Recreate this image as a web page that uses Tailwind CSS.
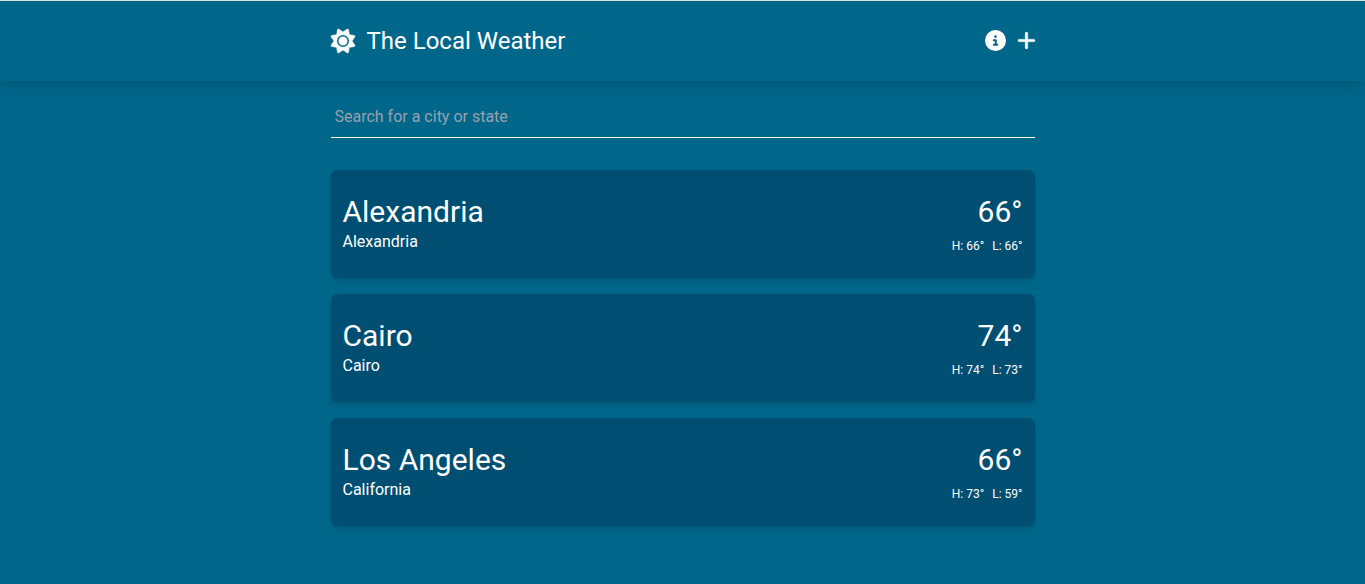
<!DOCTYPE html>
<html lang="en">
<head>
<meta charset="utf-8">
<meta name="viewport" content="width=device-width, initial-scale=1">
<title>The Local Weather</title>
<script src="https://cdn.jsdelivr.net/npm/@tailwindcss/browser@4"></script>
</head>
<body class="min-h-screen bg-[#00668a] font-['Roboto',sans-serif] text-white">
<header class="sticky top-0 border-t border-[#d9e2e2] bg-[#00668a] shadow-lg">
  <nav class="mx-auto flex max-w-3xl items-center justify-between px-8 py-6">
    <a href="#" class="flex items-center gap-3">
      <svg class="size-6 overflow-visible" viewBox="0 0 512 512" aria-hidden="true">
        <path fill="currentColor" stroke="currentColor" stroke-width="14" d="M361.5 1.2c5 2.1 8.6 6.6 9.6 11.9L391 121l107.9 19.8c5.3 1 9.8 4.6 11.9 9.6s1.5 10.7-1.6 15.2L446.9 256l62.3 90.3c3.1 4.5 3.7 10.2 1.6 15.2s-6.6 8.6-11.9 9.6L391 391 371.1 498.9c-1 5.3-4.6 9.8-9.6 11.9s-10.7 1.5-15.2-1.6L256 446.9l-90.3 62.3c-4.5 3.1-10.2 3.7-15.2 1.6s-8.6-6.6-9.6-11.9L121 391 13.1 371.1c-5.3-1-9.8-4.6-11.9-9.6s-1.5-10.7 1.6-15.2L65.1 256 2.8 165.7c-3.1-4.5-3.7-10.2-1.6-15.2s6.6-8.6 11.9-9.6L121 121 140.9 13.1c1-5.3 4.6-9.8 9.6-11.9s10.7-1.5 15.2 1.6L256 65.1 346.300 2.800c4.500-3.100 10.200-3.700 15.200-1.600z"/>
        <circle cx="256" cy="256" r="112" fill="none" stroke="#00668a" stroke-width="32"/>
      </svg>
      <span class="text-2xl">The Local Weather</span>
    </a>
    <div class="flex items-center gap-3 pb-px">
      <button type="button" aria-label="About">
        <svg class="block size-[21px]" viewBox="0 0 512 512" fill="currentColor" aria-hidden="true"><path d="M256 512A256 256 0 1 0 256 0a256 256 0 1 0 0 512zM216 336h24V272H216c-13.300 0-24-10.700-24-24s10.700-24 24-24h48c13.300 0 24 10.700 24 24v88h8c13.300 0 24 10.700 24 24s-10.700 24-24 24H216c-13.300 0-24-10.700-24-24s10.700-24 24-24zm40-208a32 32 0 1 1 0 64 32 32 0 1 1 0-64z"/></svg>
      </button>
      <button type="button" aria-label="Add city">
        <svg class="block h-[21px] w-[17px] overflow-visible" viewBox="16 0 416 512" fill="currentColor" stroke="currentColor" stroke-width="8" aria-hidden="true"><path d="M256 80c0-17.700-14.300-32-32-32s-32 14.300-32 32V224H48c-17.700 0-32 14.300-32 32s14.300 32 32 32H192V432c0 17.700 14.300 32 32 32s32-14.300 32-32V288H400c17.700 0 32-14.300 32-32s-14.300-32-32-32H256V80z"/></svg>
      </button>
    </div>
  </nav>
</header>
<main class="mx-auto max-w-3xl px-8 pt-4">
  <input type="text" aria-label="Search for a city or state" placeholder="Search for a city or state" class="mb-8 block w-full border-b border-white bg-transparent px-1 py-2 placeholder:text-gray-400 focus:outline-none">
  <ul class="flex flex-col gap-4">
    <li class="flex justify-between rounded-md bg-[#004e71] px-3 py-6 shadow-md">
      <div>
        <h2 class="text-3xl">Alexandria</h2>
        <p>Alexandria</p>
      </div>
      <div class="flex flex-col items-end gap-2">
        <p class="text-3xl">66°</p>
        <p class="flex gap-2 text-xs"><span>H: 66°</span><span>L: 66°</span></p>
      </div>
    </li>
    <li class="flex justify-between rounded-md bg-[#004e71] px-3 py-6 shadow-md">
      <div>
        <h2 class="text-3xl">Cairo</h2>
        <p>Cairo</p>
      </div>
      <div class="flex flex-col items-end gap-2">
        <p class="text-3xl">74°</p>
        <p class="flex gap-2 text-xs"><span>H: 74°</span><span>L: 73°</span></p>
      </div>
    </li>
    <li class="flex justify-between rounded-md bg-[#004e71] px-3 py-6 shadow-md">
      <div>
        <h2 class="text-3xl">Los Angeles</h2>
        <p>California</p>
      </div>
      <div class="flex flex-col items-end gap-2">
        <p class="text-3xl">66°</p>
        <p class="flex gap-2 text-xs"><span>H: 73°</span><span>L: 59°</span></p>
      </div>
    </li>
  </ul>
</main>
</body>
</html>
